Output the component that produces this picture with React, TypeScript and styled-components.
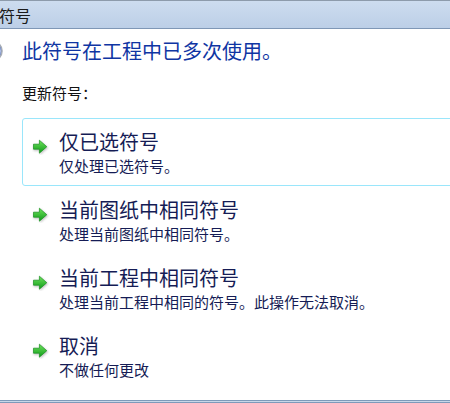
import React from "react";
import styled, { createGlobalStyle } from "styled-components";

const GlobalStyle = createGlobalStyle`
    html, body {
        margin: 0;
        padding: 0;
        background: #ffffff;
        overflow: hidden;
    }
    body {
        font-family: "Noto Sans CJK SC", "Noto Sans", sans-serif;
    }
`;

const Window = styled.div`
    width: 450px;
    height: 403px;
    display: flex;
    flex-direction: column;
    overflow: hidden;
    background: #ffffff;
`;

const TitleBar = styled.div`
    height: 27px;
    flex: none;
    border-top: 1px solid #8d9bab;
    border-bottom: 1px solid #7f97b6;
    background: linear-gradient(#cddcef, #bccfe7);
    display: flex;
    align-items: center;
`;

const TitleText = styled.span`
    margin-left: -1px;
    font-size: 16px;
    color: #1b1b1b;
    line-height: 1;
`;

const Body = styled.div`
    flex: 1;
    padding-left: 22px;
    display: flex;
    flex-direction: column;
`;

const HeaderRow = styled.div`
    margin-top: 8px;
    margin-left: -41px;
    display: flex;
    align-items: center;
    gap: 19px;
`;

const Heading = styled.h1`
    margin: 0;
    font-size: 20px;
    line-height: 28px;
    font-weight: normal;
    color: #0f35a3;
    white-space: nowrap;
`;

const SectionLabel = styled.div`
    margin-top: 18px;
    font-size: 15px;
    line-height: 20px;
    color: #111111;
`;

const CommandList = styled.div`
    margin-top: 15px;
    margin-right: -40px;
    display: flex;
    flex-direction: column;
`;

const CommandLink = styled.div<{ $selected?: boolean }>`
    box-sizing: border-box;
    height: 68px;
    padding: 10px 0 0 9px;
    border: 1px solid ${ props => props.$selected ? "#9ae6fb" : "transparent" };
    border-radius: 3px;
    display: grid;
    grid-template-columns: 17px 1fr;
    grid-template-rows: 26px auto;
    column-gap: 10px;
    row-gap: 1px;
    color: #151c55;
`;

const ArrowBox = styled.div`
    grid-row: 1;
    align-self: center;
    margin-top: 4px;
    width: 17px;
    height: 16px;
`;

const CommandTitle = styled.div`
    grid-column: 2;
    font-size: 20px;
    line-height: 26px;
    white-space: nowrap;
`;

const CommandNote = styled.div`
    grid-column: 2;
    font-size: 15px;
    line-height: 20px;
    white-space: nowrap;
`;

const Footer = styled.div`
    height: 1px;
    flex: none;
    border-top: 1px solid #7e9aba;
    border-bottom: 1px solid #7e9aba;
    background: #c9d7e8;
`;

const InfoIcon = () =>
    <svg width="22" height="22" viewBox="0 0 22 22">
        <circle cx="11" cy="11" r="10" fill="#3f63c4" stroke="#a6acb5" strokeWidth="1.6" />
        <circle cx="11" cy="11" r="8.4" fill="none" stroke="#e8ecf2" strokeWidth="0.8" />
    </svg>

const GreenArrow = () =>
    <svg width="17" height="16" viewBox="0 0 17 16">
        <defs>
            <linearGradient id="arrowFill" x1="0" y1="0" x2="0" y2="1">
                <stop offset="0" stopColor="#6ee35a" />
                <stop offset="1" stopColor="#0f9a1a" />
            </linearGradient>
            <filter id="arrowShadow" x="-30%" y="-30%" width="160%" height="160%">
                <feGaussianBlur stdDeviation="0.9" />
            </filter>
        </defs>
        <path
            d="M1 5 H7.5 V1 L15.5 8 L7.5 15 V11 H1 Z"
            fill="#8a8a8a"
            opacity="0.55"
            filter="url(#arrowShadow)"
            transform="translate(0.6 0.8)"
        />
        <path
            d="M1.5 5.2 H7.4 V1.2 L14.8 7.7 L7.4 14.2 V10.2 H1.5 Z"
            fill="url(#arrowFill)"
            stroke="#18901f"
            strokeWidth="0.7"
            strokeLinejoin="round"
        />
    </svg>

type Command = {
    title : string;
    note : string;
    selected ?: boolean;
}

const commands : Array<Command> = [
    { title: "仅已选符号", note: "仅处理已选符号。", selected: true },
    { title: "当前图纸中相同符号", note: "处理当前图纸中相同符号。" },
    { title: "当前工程中相同符号", note: "处理当前工程中相同的符号。此操作无法取消。" },
    { title: "取消", note: "不做任何更改" },
];

export default function App() {
    return (
        <>
            <GlobalStyle />
            <Window>
                <TitleBar>
                    <TitleText>符号</TitleText>
                </TitleBar>
                <Body>
                    <HeaderRow>
                        <InfoIcon />
                        <Heading>此符号在工程中已多次使用。</Heading>
                    </HeaderRow>
                    <SectionLabel>更新符号：</SectionLabel>
                    <CommandList>
                        { commands.map(( cmd, index ) =>
                            <CommandLink key={`cmd-${index}`} $selected={cmd.selected}>
                                <ArrowBox><GreenArrow /></ArrowBox>
                                <CommandTitle>{cmd.title}</CommandTitle>
                                <CommandNote>{cmd.note}</CommandNote>
                            </CommandLink>
                        )}
                    </CommandList>
                </Body>
                <Footer />
            </Window>
        </>
    );
}
